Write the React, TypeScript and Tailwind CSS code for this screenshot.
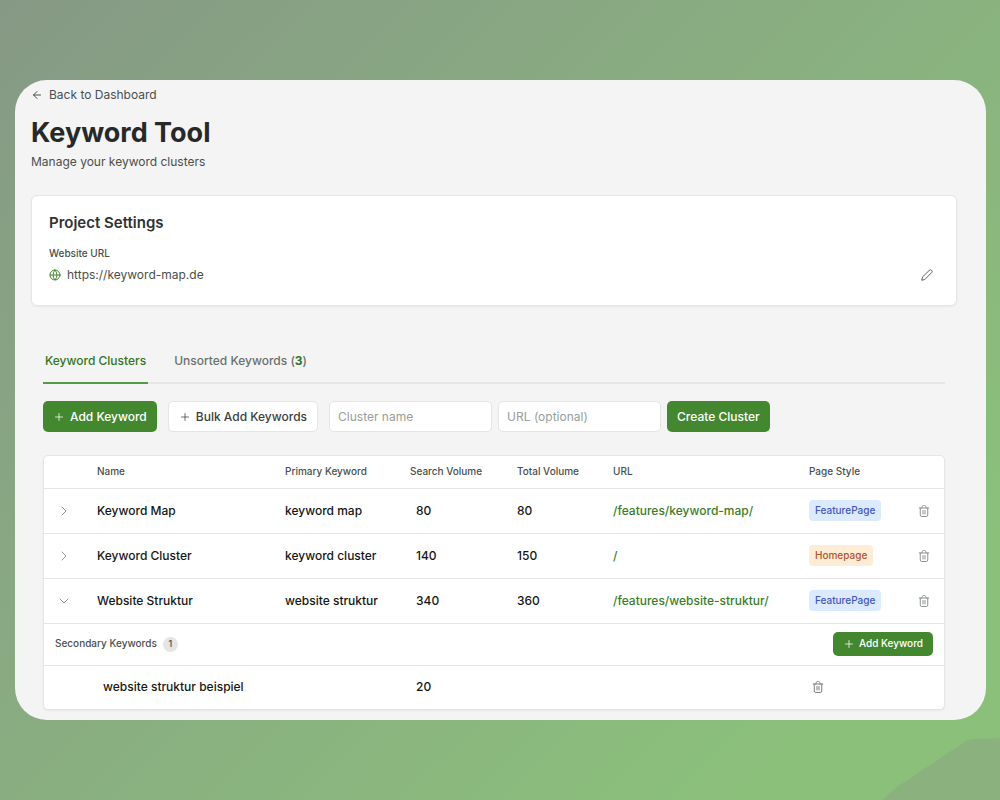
import { useState } from "react";
import { ArrowLeft, ChevronDown, ChevronRight, Globe, Plus } from "lucide-react";

type Cluster = {
  name: string;
  primary: string;
  searchVolume: number;
  totalVolume: number;
  url: string;
  style: "FeaturePage" | "Homepage";
  secondary: { keyword: string; volume: number }[];
};

const clusters: Cluster[] = [
  {
    name: "Keyword Map",
    primary: "keyword map",
    searchVolume: 80,
    totalVolume: 80,
    url: "/features/keyword-map/",
    style: "FeaturePage",
    secondary: [],
  },
  {
    name: "Keyword Cluster",
    primary: "keyword cluster",
    searchVolume: 140,
    totalVolume: 150,
    url: "/",
    style: "Homepage",
    secondary: [],
  },
  {
    name: "Website Struktur",
    primary: "website struktur",
    searchVolume: 340,
    totalVolume: 360,
    url: "/features/website-struktur/",
    style: "FeaturePage",
    secondary: [{ keyword: "website struktur beispiel", volume: 20 }],
  },
];

const badgeStyles = {
  FeaturePage: "bg-blue-100 text-[#3f57c0]",
  Homepage: "bg-[#ffecd4] text-[#b4532f]",
};

function TrashIcon() {
  return (
    <svg
      width="12"
      height="12"
      viewBox="0 0 24 24"
      fill="none"
      stroke="currentColor"
      strokeWidth="2"
      strokeLinecap="round"
      strokeLinejoin="round"
    >
      <path d="M2.5 6h19" />
      <path d="M4.5 6v14a3 3 0 0 0 3 3h9a3 3 0 0 0 3-3V6" />
      <path d="M7.5 6l1.2-3.2A2.5 2.5 0 0 1 11 1h2a2.5 2.5 0 0 1 2.3 1.8L16.5 6" />
      <path d="M10 11v7" />
      <path d="M14 11v7" />
    </svg>
  );
}

function PencilIcon() {
  return (
    <svg
      width="12"
      height="12"
      viewBox="0 0 24 24"
      fill="none"
      stroke="currentColor"
      strokeWidth="2"
      strokeLinecap="round"
      strokeLinejoin="round"
    >
      <path d="M17 2.5a3.2 3.2 0 0 1 4.5 4.5L7.5 21 1.5 22.5 3 16.5z" />
    </svg>
  );
}

function ClusterRow({ cluster, initialOpen }: { cluster: Cluster; initialOpen: boolean }) {
  const [isOpen, setIsOpen] = useState(initialOpen);
  const Chevron = isOpen ? ChevronDown : ChevronRight;

  return (
    <>
      <tr className="h-[45px] border-t border-[#e4e5e4]">
        <td className="px-3">
          <button
            aria-label={`Toggle ${cluster.name}`}
            aria-expanded={isOpen}
            onClick={() => setIsOpen(!isOpen)}
            className="block text-[#8d938f]"
          >
            <Chevron size={16} strokeWidth={1.5} />
          </button>
        </td>
        <td className="px-3">{cluster.name}</td>
        <td className="px-3">{cluster.primary}</td>
        <td className="px-[18px]">{cluster.searchVolume}</td>
        <td className="px-3">{cluster.totalVolume}</td>
        <td className="px-3">
          <a href={cluster.url} className="text-[#3a7d28] hover:underline">
            {cluster.url}
          </a>
        </td>
        <td className="px-3">
          <span
            className={`inline-block rounded px-1.5 text-[10px] leading-[21px] ${badgeStyles[cluster.style]}`}
          >
            {cluster.style}
          </span>
        </td>
        <td className="px-3">
          <button aria-label={`Delete ${cluster.name}`} className="block text-[#8d938f]">
            <TrashIcon />
          </button>
        </td>
      </tr>

      {/* Secondary keywords */}
      {isOpen && (
        <tr className="h-[42px] border-t border-[#e4e5e4]">
          <td colSpan={8} className="px-[11px]">
            <div className="flex items-center justify-between">
              <div className="flex items-center gap-1.5 text-[10px] text-[#4a4f4c]">
                Secondary Keywords
                <span className="flex size-[15px] items-center justify-center rounded-full bg-[#e4e5e4] text-[9px]">
                  {cluster.secondary.length}
                </span>
              </div>
              <button className="flex h-6 items-center gap-1 rounded-[5px] bg-[#43882f] px-2.5 text-[10px] text-white">
                <Plus size={12} strokeWidth={1.5} />
                Add Keyword
              </button>
            </div>
          </td>
        </tr>
      )}
      {isOpen &&
        cluster.secondary.map((item) => (
          <tr key={item.keyword} className="h-11 border-t border-[#e4e5e4]">
            <td />
            <td colSpan={2} className="px-[18px]">
              {item.keyword}
            </td>
            <td className="px-[18px]">{item.volume}</td>
            <td />
            <td />
            <td className="px-[15px]">
              <button aria-label={`Delete ${item.keyword}`} className="block text-[#7b817d]">
                <TrashIcon />
              </button>
            </td>
            <td />
          </tr>
        ))}
    </>
  );
}

export default function App() {
  return (
    <div className="relative min-h-screen overflow-hidden bg-linear-135 from-[#869985] to-[#8bc07b] to-85% py-20 pr-3.5 pl-[15px] font-['Inter','Liberation_Sans',sans-serif]">
      {/* Corner shape in the backdrop */}
      <svg
        className="absolute right-0 bottom-0 h-[62px] w-[118px] text-[#8bb27e]"
        viewBox="0 0 118 62"
        fill="currentColor"
      >
        <path d="M0 62 L15 49 L84 3 Q88 1 91 1 L118 0 V62 Z" />
      </svg>

      <main className="relative rounded-[32px] bg-[#f4f4f4] pt-[7px] pr-[29px] pb-2.5 pl-4 text-xs text-[#4a4f4c]">
        <a href="#dashboard" className="flex w-fit items-center gap-1.5 leading-4">
          <ArrowLeft size={12} />
          Back to Dashboard
        </a>
        <h1 className="mt-3 text-[27px] leading-9 font-bold text-[#272928]">Keyword Tool</h1>
        <p className="mt-px leading-5">Manage your keyword clusters</p>

        {/* Project settings */}
        <section className="mt-[23px] rounded-md border border-[#e4e5e4] bg-white px-[17px] pt-[17px] pb-5 shadow-xs">
          <h2 className="text-[15px] leading-5 font-semibold text-[#2f3231]">Project Settings</h2>
          <h3 className="mt-3 text-[10px] leading-4 font-medium">Website URL</h3>
          <div className="mt-1 flex items-center justify-between pr-1.5">
            <span className="flex items-center gap-1.5 leading-5">
              <Globe size={12} className="text-[#43882f]" />
              https://keyword-map.de
            </span>
            <button aria-label="Edit website URL" className="text-[#5d635f]">
              <PencilIcon />
            </button>
          </div>
        </section>

        <div className="mt-9 mr-3 ml-3 font-medium">
          {/* Tabs */}
          <div role="tablist" className="flex gap-6 border-b-2 border-[#e6e7e6]">
            <button
              role="tab"
              aria-selected="true"
              className="-mb-0.5 h-[42px] border-b-2 border-[#559a42] px-0.5 pb-0.5 text-[#347521]"
            >
              Keyword Clusters
            </button>
            <button role="tab" aria-selected="false" className="h-10 px-0.5 pb-0.5 text-[#6a706c]">
              Unsorted Keywords (<span className="font-bold text-[#347521]">3</span>)
            </button>
          </div>

          {/* Toolbar */}
          <div className="mt-[17px] flex h-[31px] gap-[11px]">
            <button className="flex items-center gap-[5px] rounded-[5px] bg-[#43882f] px-2.5 text-white">
              <Plus size={12} strokeWidth={1.5} />
              Add Keyword
            </button>
            <button className="flex items-center gap-[5px] rounded-[5px] border border-[#e4e5e4] bg-white px-2.5 text-[#3b3f3d]">
              <Plus size={12} strokeWidth={1.5} />
              Bulk Add Keywords
            </button>
            <form className="flex gap-1.5" onSubmit={(e) => e.preventDefault()}>
              <input
                aria-label="Cluster name"
                placeholder="Cluster name"
                className="w-[163px] rounded-[5px] border border-[#e4e5e4] bg-white px-2 font-normal placeholder:text-[#979e99]"
              />
              <input
                aria-label="URL (optional)"
                placeholder="URL (optional)"
                className="w-[163px] rounded-[5px] border border-[#e4e5e4] bg-white px-2 font-normal placeholder:text-[#979e99]"
              />
              <button type="submit" className="rounded-[5px] bg-[#43882f] px-2.5 text-white">
                Create Cluster
              </button>
            </form>
          </div>

          {/* Clusters table */}
          <div className="mt-[23px] overflow-hidden rounded-[5px] border border-[#e4e5e4] bg-white shadow-xs">
            <table className="w-full table-fixed text-left text-[#141615]">
              <colgroup>
                <col className="w-[41px]" />
                <col />
                <col className="w-[125px]" />
                <col className="w-[107px]" />
                <col className="w-24" />
                <col className="w-49" />
                <col className="w-[109px]" />
                <col className="w-[38px]" />
              </colgroup>
              <thead>
                <tr className="h-8 text-[10px] text-[#4a4f4c] *:px-3 *:font-medium">
                  <td />
                  <th>Name</th>
                  <th>Primary Keyword</th>
                  <th>Search Volume</th>
                  <th>Total Volume</th>
                  <th>URL</th>
                  <th>Page Style</th>
                  <td />
                </tr>
              </thead>
              <tbody>
                {clusters.map((cluster) => (
                  <ClusterRow
                    key={cluster.name}
                    cluster={cluster}
                    initialOpen={cluster.name === "Website Struktur"}
                  />
                ))}
              </tbody>
            </table>
          </div>
        </div>
      </main>
    </div>
  );
}
